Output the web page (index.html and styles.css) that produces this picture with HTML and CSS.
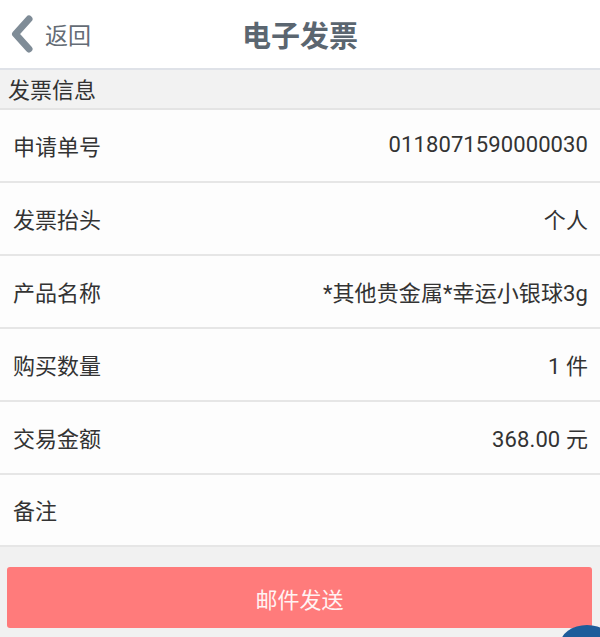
FILE: index.html
```html
<!DOCTYPE html>
<html lang="zh-CN">
<head>
<meta charset="utf-8">
<link rel="stylesheet" href="styles.css">
</head>
<body>
<div class="page">
  <header class="nav">
    <div class="back">
      <svg class="chev" width="26" height="38" viewBox="0 0 26 38"><path d="M20 4 L6.5 19 L20 34" fill="none" stroke="#7f8c97" stroke-width="7" stroke-linecap="round" stroke-linejoin="round"/></svg>
      <span class="back-text">返回</span>
    </div>
    <h1 class="title">电子发票</h1>
  </header>
  <div class="section">发票信息</div>
  <ul class="list">
    <li class="row"><span class="label">申请单号</span><span class="value">0118071590000030</span></li>
    <li class="row"><span class="label">发票抬头</span><span class="value">个人</span></li>
    <li class="row"><span class="label">产品名称</span><span class="value">*其他贵金属*幸运小银球3g</span></li>
    <li class="row"><span class="label">购买数量</span><span class="value">1 件</span></li>
    <li class="row"><span class="label">交易金额</span><span class="value">368.00 元</span></li>
    <li class="row last"><span class="label">备注</span><span class="value"></span></li>
  </ul>
  <div class="actions">
    <button class="send">邮件发送</button>
  </div>
  <div class="blob"></div>
</div>
</body>
</html>
```

FILE: styles.css
```css
* { box-sizing: border-box; margin: 0; padding: 0; }
html, body { width: 600px; height: 637px; overflow: hidden; }
body {
  background: #f1f1f1;
  font-family: "Roboto", "Noto Sans CJK SC", sans-serif;
  color: #333;
}
.page { position: relative; height: 637px; }
.nav {
  height: 70px;
  background: #fff;
  border-bottom: 2px solid #dfe2e8;
  position: relative;
  display: flex;
  align-items: center;
}
.back {
  display: flex;
  align-items: center;
  padding-left: 9px;
  gap: 10px;
  position: relative;
  z-index: 1;
}
.chev { display: block; margin-top: 0; }
.back-text {
  font-size: 23px;
  color: #646c75;
  font-family: "Noto Sans CJK SC", sans-serif;
  font-weight: 400;
}
.title {
  position: absolute;
  left: 0; right: 0; top: 0;
  height: 68px;
  line-height: 68px;
  text-align: center;
  font-size: 29px;
  font-weight: 700;
  color: #5b6670;
  font-family: "Noto Sans CJK SC", sans-serif;
}
.section {
  height: 40px;
  line-height: 36px;
  padding-left: 8px;
  font-size: 22px;
  color: #333;
  background: #f2f2f2;
  border-bottom: 2px solid #e4e4e4;
  font-family: "Noto Sans CJK SC", sans-serif;
}
.list { list-style: none; background: #fdfdfd; }
.row {
  height: 73px;
  display: flex;
  align-items: center;
  justify-content: space-between;
  padding: 0 12px 2px 13px;
  border-bottom: 2px solid #e6e6e6;
  font-size: 22px;
  color: #333;
}
.row.last { height: 72px; }
.label { font-family: "Noto Sans CJK SC", sans-serif; }
.value { font-size: 22px; letter-spacing: 0.1px; }
.actions { padding: 20px 8px 0 7px; }
.send {
  width: 100%;
  height: 61px;
  border: none;
  border-radius: 3px;
  background: #ff7b7b;
  color: #fff3f3;
  font-size: 22px;
  font-family: "Noto Sans CJK SC", sans-serif;
}
.blob {
  position: absolute;
  right: -14px;
  top: 625px;
  width: 54px;
  height: 40px;
  border-radius: 50%;
  background: #1d5c9a;
}
```
